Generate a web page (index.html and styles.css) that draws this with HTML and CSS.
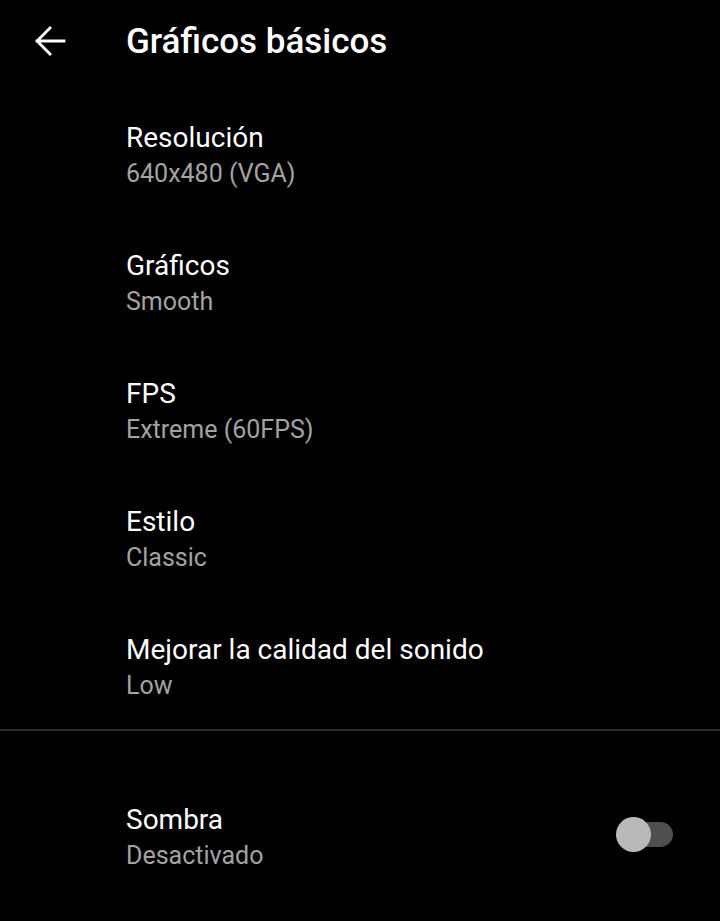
FILE: index.html
```html
<!DOCTYPE html>
<html lang="es">
<head>
<meta charset="utf-8">
<link rel="stylesheet" href="styles.css">
</head>
<body>
<header class="appbar">
  <div class="back">
    <svg width="42" height="42" viewBox="0 0 24 24"><path d="M20 12H4.6M12 4.6L4.6 12L12 19.4" fill="none" stroke="#fff" stroke-width="1.6" stroke-linecap="square"/></svg>
  </div>
  <h1 class="title">Gráficos básicos</h1>
</header>
<main class="list">
  <div class="item"><div class="item-title">Resolución</div><div class="item-sub">640x480 (VGA)</div></div>
  <div class="item"><div class="item-title">Gráficos</div><div class="item-sub">Smooth</div></div>
  <div class="item"><div class="item-title">FPS</div><div class="item-sub">Extreme (60FPS)</div></div>
  <div class="item"><div class="item-title">Estilo</div><div class="item-sub">Classic</div></div>
  <div class="item"><div class="item-title">Mejorar la calidad del sonido</div><div class="item-sub">Low</div></div>
  <div class="divider"></div>
  <div class="item switch-item">
    <div class="text"><div class="item-title">Sombra</div><div class="item-sub">Desactivado</div></div>
    <div class="switch"><div class="track"></div><div class="thumb"></div></div>
  </div>
</main>
</body>
</html>
```
FILE: styles.css
```css
html, body { margin: 0; padding: 0; background: #000; }
body { font-family: Roboto, "Noto Sans", sans-serif; color: #fff; width: 720px; height: 921px; overflow: hidden; }
.appbar { height: 82px; display: flex; align-items: center; }
.back { width: 126px; display: flex; align-items: center; padding-left: 29px; box-sizing: border-box; }
.back svg { display: block; }
.title { margin: 2px 0 0; font-size: 35px; font-weight: 500; line-height: 40px; letter-spacing: 0; }
.list { display: flex; flex-direction: column; }
.item { height: 128px; box-sizing: border-box; padding: 40px 0 0 126px; }
.item-title { font-size: 28px; line-height: 32px; color: #fff; }
.item-sub { font-size: 25px; line-height: 32px; margin-top: 4px; color: #a3a3a3; }
.divider { height: 2px; background: #2b2b2b; margin-top: 7px; }
.switch-item { display: flex; align-items: flex-start; justify-content: space-between; padding-top: 73px; padding-right: 47px; }
.switch { position: relative; width: 57px; height: 36px; margin-top: 13px; }
.track { position: absolute; left: 2px; right: 0; top: 5px; height: 25px; border-radius: 12.5px; background: #4f4f4f; }
.thumb { position: absolute; left: 0; top: 0; width: 35px; height: 35px; border-radius: 50%; background: #b9b9b9; }
```
